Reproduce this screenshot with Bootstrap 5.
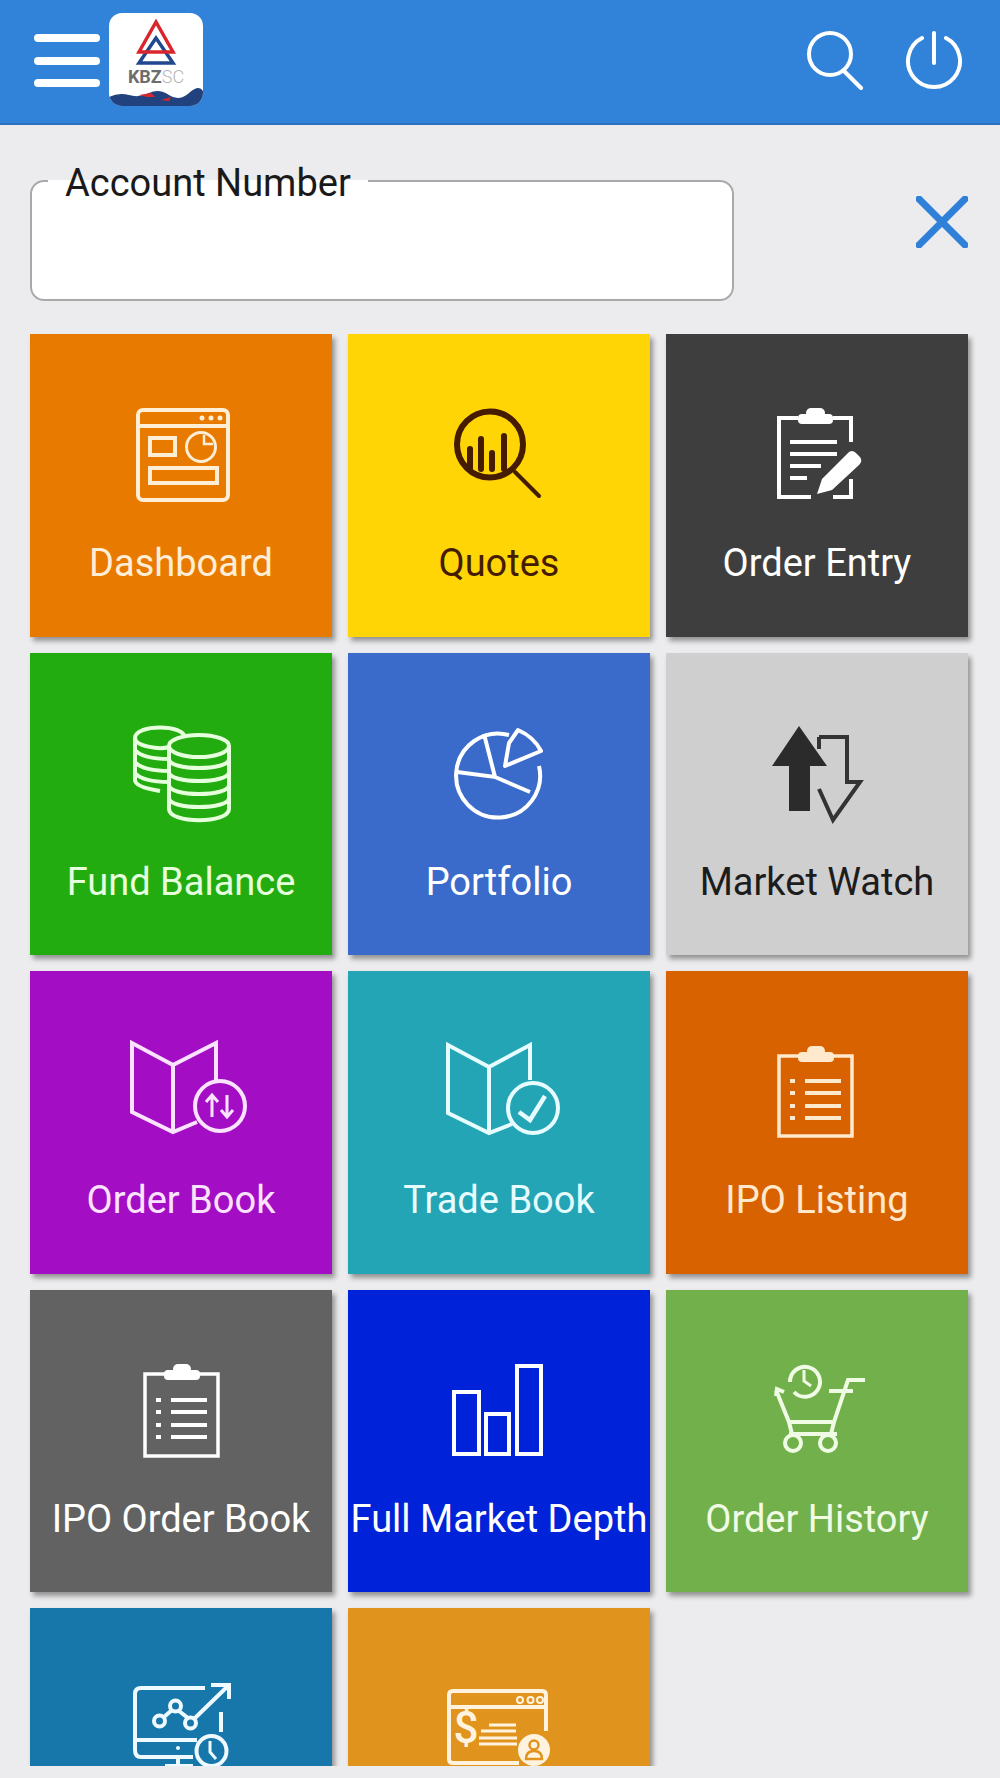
<!DOCTYPE html>
<html lang="en">
  <head>
    <meta charset="utf-8">
    <meta name="viewport" content="width=device-width, initial-scale=1">
    <title>KBZSC Menu</title>
    <link href="https://cdn.jsdelivr.net/npm/bootstrap@5.3.3/dist/css/bootstrap.min.css" rel="stylesheet">
    <style>
      body { background: #ececee; font-family: Roboto, "Liberation Sans", sans-serif; overflow: hidden; }
      .app-bar { height: 125px; background: #3182d9; border-bottom: 2px solid #2a70bd; padding: 13px 36px 0 34px; }
      .menu-btn { width: 66px; margin-top: 21px; height: 53px; }
      .menu-btn span { height: 8px; background: #fff; border-radius: 4px; }
      .logo-box { width: 94px; height: 93px; margin-left: 9px; background: #fff; border-radius: 13px; overflow: hidden; }
      .logo-box svg { display: block; }
      .bar-icons { gap: 39px; margin-top: 13px; }
      .acct-row { padding: 33px 32px 33px 30px; }
      .acct-field { width: 704px; height: 143px; background: #fff; border: 2.5px solid #a9a9a9; border-radius: 14px; padding: 0 0 0 16px; margin: 0; min-width: 0; }
      .acct-field legend { float: none; width: auto; margin: 0; padding: 4px 17px 0; font-size: 38px; line-height: 42px; color: #1a1a1a; }
      .close-x { margin-top: 38px; }
      .tile-scroll { height: 1432px; padding: 0 32px 0 30px; overflow: hidden; }
      .tile { height: 302.5px; padding-top: 60px; box-shadow: 3px 4px 5px rgba(0, 0, 0, .38); color: var(--ink); background: var(--paint); }
      .tile svg { display: block; fill: none; stroke: currentColor; stroke-width: 4; overflow: visible; }
      .tile-name { margin-top: 27px; font-size: 38px; line-height: 44px; white-space: nowrap; }
      .solid { fill: currentColor; stroke: none; }
      .coin-lines { stroke: #c9f5bc; }
    </style>
  </head>
  <body>
    <!-- Top bar -->
    <header class="app-bar d-flex justify-content-between align-items-start">
      <div class="d-flex align-items-start">
        <div class="menu-btn d-flex flex-column justify-content-between"><span></span><span></span><span></span></div>
        <div class="logo-box">
          <svg width="94" height="93" viewBox="0 0 94 93">
            <g fill="none" stroke-width="3.5">
              <path d="M47 25 L30 50 H64 Z" stroke="#21478f"/>
              <path d="M47 9 L30 39 H64 Z" stroke="#d8262c"/>
            </g>
            <text x="47" y="70" text-anchor="middle" font-family="Roboto, sans-serif" font-size="18" font-weight="700" fill="#6d6d6d">KBZ<tspan font-weight="300" fill="#b5b5b5">SC</tspan></text>
            <path d="M0 84 Q10 79 20 82 T40 80 T60 82 T80 80 T94 78 V93 H0 Z" fill="#22427f"/>
            <path d="M30 82 L42 80 L46 84 L38 84 Z M52 87 L62 84 L60 88 Z" fill="#d8262c"/>
          </svg>
        </div>
      </div>
      <div class="bar-icons d-flex align-items-start">
        <svg width="60" height="64" viewBox="0 0 60 64" fill="none" stroke="#fff" stroke-width="4" stroke-linecap="round">
          <circle cx="25" cy="28" r="21"/><path d="M39 45 L56 62"/>
        </svg>
        <svg width="60" height="64" viewBox="0 0 60 64" fill="none" stroke="#fff" stroke-width="4" stroke-linecap="round">
          <path d="M18 12 A26 26 0 1 0 42 12"/><path d="M30 7 V37"/>
        </svg>
      </div>
    </header>

    <!-- Account field -->
    <div class="acct-row d-flex justify-content-between align-items-start">
      <fieldset class="acct-field">
        <legend>Account Number</legend>
      </fieldset>
      <svg class="close-x" width="52" height="52" viewBox="0 0 52 52" fill="none" stroke="#2f80d9" stroke-width="7" stroke-linecap="round">
        <path d="M3 3 L49 49 M49 3 L3 49"/>
      </svg>
    </div>

    <!-- Menu tiles -->
    <div class="tile-scroll">
      <div class="row g-3">
        <div class="col-4">
          <div class="tile d-flex flex-column align-items-center" style="--paint:#e87a00;--ink:#ffeed6">
            <svg width="120" height="120" viewBox="0 0 120 120">
              <rect x="17" y="16" width="90" height="90" rx="5"/>
              <path d="M17 32 H107"/>
              <circle class="solid" cx="81" cy="24" r="2.500"/><circle class="solid" cx="90" cy="24" r="2.500"/><circle class="solid" cx="99" cy="24" r="2.500"/>
              <rect x="29" y="44" width="25" height="17"/>
              <circle cx="80" cy="53" r="14.500" stroke-width="3"/>
              <path d="M83 41 V50 H92" stroke-width="2.500"/>
              <rect x="29" y="74" width="67" height="15"/>
            </svg>
            <div class="tile-name">Dashboard</div>
          </div>
        </div>
        <div class="col-4">
          <div class="tile d-flex flex-column align-items-center" style="--paint:#ffd505;--ink:#451c00">
            <svg width="120" height="120" viewBox="0 0 120 120">
              <circle cx="51" cy="50.500" r="33" stroke-width="6"/>
              <path d="M76 78 L100 102" stroke-linecap="round"/>
              <path d="M31 75 V55 M42 75 V45 M53 75 V59 M65 75 V42" stroke-width="6" stroke-linecap="round"/>
            </svg>
            <div class="tile-name">Quotes</div>
          </div>
        </div>
        <div class="col-4">
          <div class="tile d-flex flex-column align-items-center" style="--paint:#3e3e3e;--ink:#fff">
            <svg width="120" height="120" viewBox="0 0 120 120">
              <path d="M41 24 H22 V103 H54 M76 103 H94 V85 M94 48 V24 H76"/>
              <rect class="solid" x="41" y="20" width="35" height="10" rx="4"/>
              <rect class="solid" x="49" y="14" width="19" height="10" rx="5"/>
              <path d="M33 48 H80 M33 60 H80 M33 72 H64 M33 84 H50"/>
              <path class="solid" d="M60 100 L65 85 L92 58 Q96 55 100 60 L103 63 Q106 67 102 71 L75 96 Z"/>
            </svg>
            <div class="tile-name">Order Entry</div>
          </div>
        </div>

        <div class="col-4">
          <div class="tile d-flex flex-column align-items-center" style="--paint:#23ac10;--ink:#e6ffdc">
            <svg class="coin-lines" width="120" height="120" viewBox="0 0 120 120" stroke-width="3">
              <path d="M14 25 C14 11 64 11 64 25 M14 25 V67 Q14 74 39 78 M14 25 C14 33 38 37 48 34 M14 37 Q22 46 48 46 M14 49 Q22 58 48 58 M14 60 Q22 69 48 69"/>
              <ellipse cx="78" cy="33" rx="30" ry="11"/>
              <path d="M48 33 V96 C48 111 108 111 108 96 V33"/>
              <path d="M48 46 C48 58 108 58 108 46 M48 59 C48 71 108 71 108 59 M48 72 C48 84 108 84 108 72 M48 85 C48 97 108 97 108 85"/>
            </svg>
            <div class="tile-name">Fund Balance</div>
          </div>
        </div>
        <div class="col-4">
          <div class="tile d-flex flex-column align-items-center" style="--paint:#3a6bcb;--ink:#fff">
            <svg width="120" height="120" viewBox="0 0 120 120" stroke-width="3.500">
              <path d="M70 22 A42 42 0 1 0 100 53"/>
              <path d="M45 21 L56 64 L18 59 M56 64 L91 79"/>
              <path d="M66 53 L70 30 L79 17 Q95 24 102 38 Z" stroke-linejoin="round"/>
            </svg>
            <div class="tile-name">Portfolio</div>
          </div>
        </div>
        <div class="col-4">
          <div class="tile d-flex flex-column align-items-center" style="--paint:#cfcfd0;--ink:#1c1c1c">
            <svg width="120" height="120" viewBox="0 0 120 120" stroke-width="2">
              <path fill="#2b2b2b" stroke="none" d="M42 13 L70 53 H53 V98 H32 V53 H15 Z"/>
              <path d="M62 24 H90 V69 H103 L76 107 L62 76 M62 24 V36" stroke="#333"/>
            </svg>
            <div class="tile-name">Market Watch</div>
          </div>
        </div>

        <div class="col-4">
          <div class="tile d-flex flex-column align-items-center" style="--paint:#a30ec5;--ink:#fbe3ff">
            <svg width="120" height="120" viewBox="0 0 120 120" stroke-width="3.500">
              <path d="M95 49 V12 L52 34 L11 12 V81 L52 101 L76 91 M52 34 V101"/>
              <circle cx="99" cy="75" r="25"/>
              <path d="M91 86 V64 M85 71 L91 64 L97 71 M106 64 V86 M100 79 L106 86 L112 79" stroke-width="3"/>
            </svg>
            <div class="tile-name">Order Book</div>
          </div>
        </div>
        <div class="col-4">
          <div class="tile d-flex flex-column align-items-center" style="--paint:#24a5b5;--ink:#e6fcff">
            <svg width="120" height="120" viewBox="0 0 120 120" stroke-width="3.500">
              <path d="M91 49 V14 L50 36 L9 14 V82 L50 102 L73 93 M50 36 V102"/>
              <circle cx="94" cy="77" r="25"/>
              <path d="M80 81 L91 89 L106 65" stroke-width="4.500"/>
            </svg>
            <div class="tile-name">Trade Book</div>
          </div>
        </div>
        <div class="col-4">
          <div class="tile d-flex flex-column align-items-center" style="--paint:#d96200;--ink:#ffe9cc">
            <svg width="120" height="120" viewBox="0 0 120 120">
              <rect x="22" y="25" width="73" height="80" stroke-width="3.500"/>
              <rect class="solid" x="41" y="21" width="36" height="10" rx="4"/>
              <rect class="solid" x="50" y="15" width="18" height="10" rx="5"/>
              <path d="M48 50 H84 M48 62 H84 M48 75 H84 M48 87 H84"/>
              <path d="M33 50 H38 M33 62 H38 M33 75 H38 M33 87 H38"/>
            </svg>
            <div class="tile-name">IPO Listing</div>
          </div>
        </div>

        <div class="col-4">
          <div class="tile d-flex flex-column align-items-center" style="--paint:#626262;--ink:#fff">
            <svg width="120" height="120" viewBox="0 0 120 120">
              <g transform="translate(2 -1)">
                <rect x="22" y="25" width="73" height="82" stroke-width="3.500"/>
                <rect class="solid" x="41" y="21" width="36" height="10" rx="4"/>
                <rect class="solid" x="50" y="15" width="18" height="10" rx="5"/>
                <path d="M48 51 H84 M48 63 H84 M48 76 H84 M48 88 H84"/>
                <path d="M33 51 H38 M33 63 H38 M33 76 H38 M33 88 H38"/>
              </g>
            </svg>
            <div class="tile-name">IPO Order Book</div>
          </div>
        </div>
        <div class="col-4">
          <div class="tile d-flex flex-column align-items-center" style="--paint:#0022d8;--ink:#fff">
            <svg width="120" height="120" viewBox="0 0 120 120">
              <rect x="15" y="42" width="25" height="62"/>
              <rect x="47" y="64" width="23" height="40"/>
              <rect x="78" y="16" width="24" height="88"/>
            </svg>
            <div class="tile-name">Full Market Depth</div>
          </div>
        </div>
        <div class="col-4">
          <div class="tile d-flex flex-column align-items-center" style="--paint:#72b04b;--ink:#f0fbe6">
            <svg width="120" height="120" viewBox="0 0 120 120" stroke-width="3.500">
              <path d="M108 30 H91 L77 72 H32 L19 40 M19 46 L20 39 L27 42 M72 41 H96 M32 84 H80 M32 72 L35 84 M77 72 L74 84"/>
              <path d="M33 32 A15 15 0 1 1 37 42"/>
              <path d="M47 20 V31 L54 36" stroke-width="3"/>
              <circle cx="36" cy="93" r="8"/><circle cx="71" cy="93" r="8"/>
            </svg>
            <div class="tile-name">Order History</div>
          </div>
        </div>

        <div class="col-4">
          <div class="tile d-flex flex-column align-items-center" style="--paint:#1877aa;--ink:#eefaff">
            <svg width="120" height="120" viewBox="0 0 120 120" stroke-width="3.500">
              <path d="M84 20 H20 Q14 20 14 26 V82 Q14 89 20 89 H72 M14 72 H76 M100 44 V64"/>
              <path d="M74 50 L108 17 M90 17 H108 V31 M43 49 L51 42 M58 43 L67 50"/>
              <circle cx="38.500" cy="53" r="5.500"/><circle cx="54.500" cy="38" r="5.500"/><circle cx="69.500" cy="55" r="5.500"/>
              <circle cx="90.500" cy="83" r="15"/>
              <path d="M89 73 V84 L95 91" stroke-width="3"/>
              <circle class="solid" cx="57" cy="80" r="2"/>
              <path d="M57 89 V97 M44 98 H72"/>
            </svg>
          </div>
        </div>
        <div class="col-4">
          <div class="tile d-flex flex-column align-items-center" style="--paint:#e0941e;--ink:#fff3df">
            <svg width="120" height="120" viewBox="0 0 120 120" stroke-width="3.500">
              <path d="M107 63 V27 Q107 23 103 23 H14 Q10 23 10 27 V91 Q10 95 14 95 H80 M10 39 H107"/>
              <circle cx="81" cy="32" r="3" stroke-width="2"/><circle cx="91.500" cy="32" r="3" stroke-width="2"/><circle cx="101" cy="32" r="3" stroke-width="2"/>
              <text class="solid" x="27" y="75" text-anchor="middle" font-family="Roboto, sans-serif" font-size="44" font-weight="500">$</text>
              <path d="M50 57 H77 M42 63 H77 M40 70 H78 M40 76 H78" stroke-width="3"/>
              <circle class="solid" cx="95" cy="82" r="16"/>
              <circle cx="95" cy="77" r="4.500" stroke="#e0941e" stroke-width="2.500"/>
              <path d="M87 91 Q87 83 95 83 Q103 83 103 91 Z" stroke="#e0941e" stroke-width="2.500"/>
            </svg>
          </div>
        </div>
      </div>
    </div>

    <script src="https://cdn.jsdelivr.net/npm/bootstrap@5.3.3/dist/js/bootstrap.bundle.min.js"></script>
  </body>
</html>
